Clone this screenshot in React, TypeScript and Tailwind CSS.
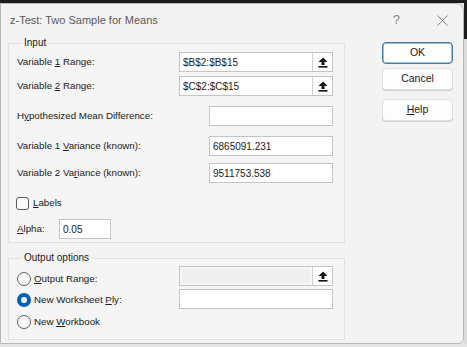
import React from "react";

const font = { fontFamily: '"Liberation Sans", Arial, sans-serif' };

function UpArrow() {
  return (
    <svg width="10" height="11" viewBox="0 0 10 11">
      <polygon points="5,0.5 9.5,5 6.5,5 6.5,8 3.5,8 3.5,5 0.5,5" fill="#111" />
      <rect x="0.5" y="9" width="9" height="1.6" fill="#111" />
    </svg>
  );
}

function RefBox({ value, disabled }: { value?: string; disabled?: boolean }) {
  return (
    <div className="flex h-[20px] w-[154px] border border-[#c4c4c4] bg-white">
      {disabled ? (
        <div className="flex-1 bg-[#f7f7f7] p-[2px]">
          <div className="h-full w-full bg-[#efefef]" />
        </div>
      ) : (
        <div className="flex flex-1 items-center pl-[3px] text-[10px] text-[#1b1b1b]">{value}</div>
      )}
      <div className="flex w-[20px] items-center justify-center border-l border-[#d0d0d0] bg-white">
        <UpArrow />
      </div>
    </div>
  );
}

function TextBox({ value, w }: { value?: string; w: string }) {
  return (
    <div className={`flex h-[20px] ${w} items-center border border-[#c4c4c4] bg-white pl-[3px] text-[10px] text-[#1b1b1b]`}>
      {value}
    </div>
  );
}

function Radio({ checked }: { checked?: boolean }) {
  return checked ? (
    <div className="flex h-[14px] w-[14px] items-center justify-center rounded-full bg-[#005fb8]">
      <div className="h-[6px] w-[6px] rounded-full bg-white" />
    </div>
  ) : (
    <div className="h-[14px] w-[14px] rounded-full border border-[#5c5c5c] bg-[#fbfbfb]" />
  );
}

function Btn({ children, primary }: { children: React.ReactNode; primary?: boolean }) {
  return (
    <div
      className={`flex h-[22px] w-[71px] items-center justify-center rounded-[4px] bg-[#fdfdfd] text-[10.5px] text-[#1b1b1b] ${
        primary ? "border border-[#3d7eaa] shadow-[inset_0_0_0_0.5px_#3d7eaa]" : "border border-[#e0e0e0] shadow-[0_1px_0_#d0d0d0]"
      }`}
    >
      {children}
    </div>
  );
}

export default function App() {
  return (
    <div className="flex h-[347px] w-[467px] flex-col overflow-hidden bg-[#e6e6e6]" style={font}>
      <div className="h-[3px] w-full bg-[#1c1c1c]" />
      <div className="flex">
        <div className="h-[341px] w-[464px] overflow-hidden rounded-tr-[8px] rounded-br-[6px] border border-[#b8b8b8] bg-[#f3f3f3] text-[9.75px] text-[#1a1a1a]">
          {/* title bar */}
          <div className="flex h-[32px] items-center">
            <div className="ml-[9px] flex-1 text-[11px] text-[#5a5a5a]">z-Test: Two Sample for Means</div>
            <div className="mr-[37px] text-[13px] font-light text-[#8a8a8a]">?</div>
            <div className="mr-[15px] flex items-center">
              <svg width="11" height="11" viewBox="0 0 11 11">
                <path d="M0.5 0.5 L10.5 10.5 M10.5 0.5 L0.5 10.5" stroke="#7a7a7a" strokeWidth="0.9" />
              </svg>
            </div>
          </div>

          <div className="flex">
            {/* left column */}
            <div className="ml-[7px] w-[337px]">
              <fieldset className="border border-[#e2e2e2] bg-[#f5f5f5] pr-[11px] pb-[3px] pl-[8px]">
                <legend className="ml-[5px] px-[2px] text-[10px] leading-[14px]">Input</legend>
                <div className="mt-[2px] flex h-[20px] items-center justify-between">
                  <span>
                    Variable <u>1</u> Range:
                  </span>
                  <RefBox value="$B$2:$B$15" />
                </div>
                <div className="mt-[4px] flex h-[20px] items-center justify-between">
                  <span>
                    Variable <u>2</u> Range:
                  </span>
                  <RefBox value="$C$2:$C$15" />
                </div>
                <div className="mt-[10px] flex h-[20px] items-center justify-between">
                  <span>
                    H<u>y</u>pothesized Mean Difference:
                  </span>
                  <TextBox w="w-[124px]" />
                </div>
                <div className="mt-[10px] flex h-[20px] items-center justify-between">
                  <span>
                    Variable 1 <u>V</u>ariance (known):
                  </span>
                  <TextBox w="w-[124px]" value="6865091.231" />
                </div>
                <div className="mt-[7px] flex h-[20px] items-center justify-between">
                  <span>
                    Variable 2 Va<u>r</u>iance (known):
                  </span>
                  <TextBox w="w-[124px]" value="9511753.538" />
                </div>
                <div className="mt-[10px] flex h-[20px] items-center gap-[4px]">
                  <div className="-ml-[1px] h-[13px] w-[13px] rounded-[3px] border border-[#5c5c5c] bg-[#fbfbfb]" />
                  <span>
                    <u>L</u>abels
                  </span>
                </div>
                <div className="mt-[6px] flex h-[20px] items-center">
                  <span className="w-[42px]">
                    <u>A</u>lpha:
                  </span>
                  <TextBox w="w-[52px]" value="0.05" />
                </div>
              </fieldset>

              <fieldset className="mt-[8px] border border-[#e2e2e2] bg-[#f5f5f5] pr-[11px] pb-[10px] pl-[8px]">
                <legend className="ml-[5px] px-[2px] text-[10px] leading-[14px]">Output options</legend>
                <div className="mt-[1px] flex h-[20px] items-start justify-between">
                  <div className="mt-[6px] flex items-center gap-[3px]">
                    <Radio />
                    <span>
                      <u>O</u>utput Range:
                    </span>
                  </div>
                  <RefBox disabled />
                </div>
                <div className="mt-[3px] flex h-[20px] items-start justify-between">
                  <div className="mt-[4px] flex items-center gap-[3px]">
                    <Radio checked />
                    <span>
                      New Worksheet <u>P</u>ly:
                    </span>
                  </div>
                  <TextBox w="w-[154px]" />
                </div>
                <div className="mt-[6px] flex h-[14px] items-center">
                  <div className="flex items-center gap-[3px]">
                    <Radio />
                    <span>
                      New <u>W</u>orkbook
                    </span>
                  </div>
                </div>
              </fieldset>
            </div>

            {/* buttons */}
            <div className="ml-[37px] mt-[6px] flex flex-col">
              <Btn primary>OK</Btn>
              <div className="mt-[4px]">
                <Btn>Cancel</Btn>
              </div>
              <div className="mt-[9px]">
                <Btn>
                  <u>H</u>elp
                </Btn>
              </div>
            </div>
          </div>
        </div>
        <div className="flex w-[3px] flex-col">
          <div className="h-[36px] bg-[#1c1c1c]" />
          <div className="flex-1 bg-[#dcdcdc]" />
        </div>
      </div>
    </div>
  );
}
